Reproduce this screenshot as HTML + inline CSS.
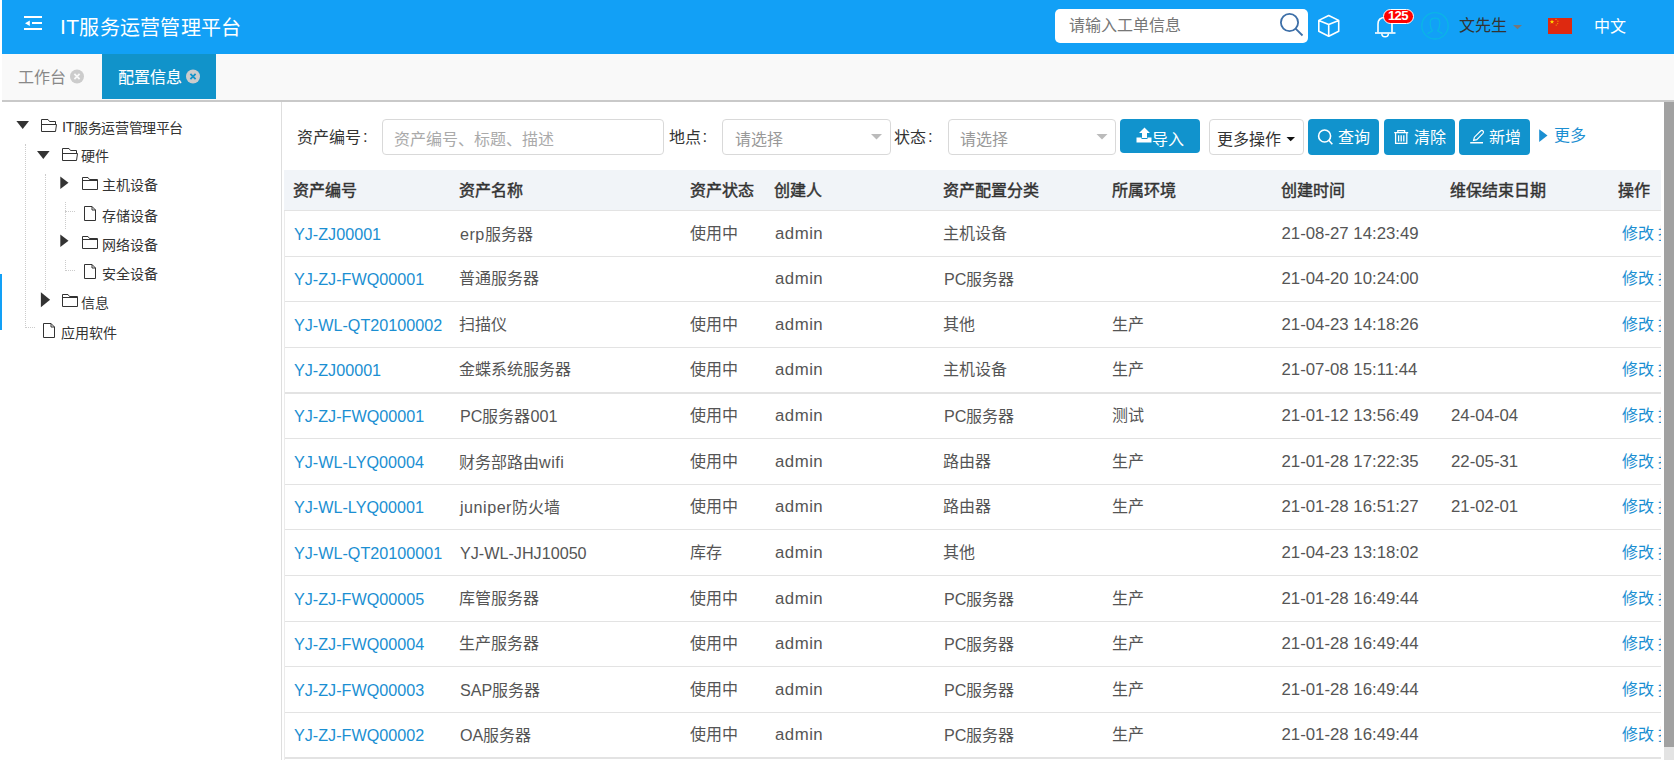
<!DOCTYPE html><html lang="zh-CN"><head><meta charset="utf-8"><style>
*{box-sizing:border-box;margin:0;padding:0}
html,body{width:1674px;height:760px;overflow:hidden;background:#fff;font-family:"Liberation Sans",sans-serif;}
.t{position:absolute;white-space:nowrap;line-height:1}
.a{position:absolute}
.l{font-size:1.05em}
.id .l{font-size:1.01em}
.c{position:relative;top:0.07em}
.rw .c{top:0}
.rw .lw{letter-spacing:0.5px}
svg{position:absolute;overflow:visible}
</style></head><body>
<div class="a" style="left:2px;top:0;width:1672px;height:54px;background:#12a0f6"></div>
<div class="a" style="left:24px;top:16px;width:18px;height:2px;background:#fff"></div>
<div class="a" style="left:32px;top:22px;width:10px;height:2px;background:#fff"></div>
<div class="a" style="left:24px;top:28px;width:18px;height:2px;background:#fff"></div>
<svg style="left:0;top:0" width="60" height="40"><path d="M25 23.2 L29.8 20.6 L29.8 25.9 Z" fill="#fff"/></svg>
<div class="t ttl" style="left:60px;top:16px;font-size:20px;color:#fff;font-weight:normal;letter-spacing:0.3px"><span class="l">IT</span><span class="c">服务运营管理平台</span></div>
<div class="a" style="left:1055px;top:9px;width:253px;height:34px;background:#fff;border-radius:5px"></div>
<div class="t " style="left:1069px;top:17px;font-size:16px;color:#777;font-weight:normal;"><span class="c">请输入工单信息</span></div>
<svg style="left:0;top:0" width="1674" height="60"><circle cx="1289.5" cy="22.5" r="8.6" fill="none" stroke="#3d6fa8" stroke-width="1.8"/><line x1="1295.6" y1="28.6" x2="1302.5" y2="35.5" stroke="#3d6fa8" stroke-width="1.8"/></svg>
<svg style="left:0;top:0" width="1674" height="60"><path d="M1328.7 15.5 L1338.7 20.4 L1338.7 31.2 L1328.7 36.2 L1318.8 31.2 L1318.8 20.4 Z M1318.8 20.4 L1328.7 24.6 L1338.7 20.4 M1328.7 24.6 L1328.7 36.2" fill="none" stroke="#fff" stroke-width="1.6" stroke-linejoin="round"/></svg>
<svg style="left:0;top:0" width="1674" height="60"><path d="M1378 32.5 L1378 24 Q1378 17.5 1385 17.5 Q1392 17.5 1392 24 L1392 32.5" fill="none" stroke="#fff" stroke-width="1.6"/><line x1="1375" y1="33" x2="1395.5" y2="33" stroke="#fff" stroke-width="1.6"/><path d="M1381.8 33.5 A3.3 3.3 0 0 0 1388.4 33.5" fill="none" stroke="#fff" stroke-width="1.5"/></svg>
<div class="a" style="left:1383px;top:9px;width:31px;height:15px;background:#f00;border:1px solid #fff;border-radius:8px"></div>
<div class="t " style="left:1388px;top:8.5px;font-size:12.5px;color:#fff;font-weight:bold;letter-spacing:-0.7px"><span class="l">125</span></div>
<svg style="left:0;top:0" width="1674" height="60"><circle cx="1435" cy="25.8" r="13.2" fill="none" stroke="#0bb5e6" stroke-width="1.3"/><path d="M1427.6 33.6 L1432.3 30.8 Q1430.2 28 1430.2 23 Q1430.2 18.2 1435 18.2 Q1439.8 18.2 1439.8 23 Q1439.8 28 1437.7 30.8 L1442.4 33.6" fill="none" stroke="#0bb5e6" stroke-width="1.3"/></svg>
<div class="t " style="left:1459px;top:17px;font-size:16px;color:#333;font-weight:normal;"><span class="c">文先生</span></div>
<svg style="left:0;top:0" width="1674" height="60"><path d="M1513 25 L1522 25 L1517.5 29.3 Z" fill="#777"/></svg>
<div class="a" style="left:1548px;top:18px;width:24px;height:16px;background:#de2910"></div>
<svg style="left:0;top:0" width="1674" height="60"><path d="M1552.00 19.40 L1552.59 20.99 L1554.28 21.06 L1552.95 22.11 L1553.41 23.74 L1552.00 22.80 L1550.59 23.74 L1551.05 22.11 L1549.72 21.06 L1551.41 20.99 Z" fill="#ffd400"/><circle cx="1556" cy="19.4" r="0.6" fill="#f5a800"/><circle cx="1557.9" cy="21.2" r="0.6" fill="#f5a800"/><circle cx="1557.7" cy="23.6" r="0.6" fill="#f5a800"/><circle cx="1556.2" cy="25.1" r="0.6" fill="#f5a800"/></svg>
<div class="t " style="left:1594px;top:18px;font-size:16px;color:#fff;font-weight:normal;"><span class="c">中文</span></div>
<div class="a" style="left:2px;top:54px;width:1672px;height:48px;background:#f9f9f9;border-bottom:2px solid #c9c9c9"></div>
<div class="t " style="left:18px;top:69px;font-size:16px;color:#888;font-weight:normal;"><span class="c">工作台</span></div>
<svg style="left:0;top:0" width="1674" height="110"><circle cx="77" cy="76.5" r="7" fill="#ccc"/><path d="M74.4 73.9 L79.6 79.1 M79.6 73.9 L74.4 79.1" stroke="#f9f9f9" stroke-width="1.8"/></svg>
<div class="a" style="left:102px;top:54px;width:114px;height:45px;background:#1193ca"></div>
<div class="t " style="left:118px;top:68.5px;font-size:16px;color:#fff;font-weight:normal;-webkit-text-stroke:0.12px #fff"><span class="c">配置信息</span></div>
<svg style="left:0;top:0" width="1674" height="110"><circle cx="193" cy="76.5" r="7" fill="#ccc"/><path d="M190.4 73.9 L195.6 79.1 M195.6 73.9 L190.4 79.1" stroke="#1193ca" stroke-width="1.8"/></svg>
<div class="a" style="left:281px;top:102px;width:1px;height:658px;background:#dedede"></div>
<div class="a" style="left:0;top:274px;width:2px;height:56px;background:#12a0f6"></div>
<svg style="left:0;top:0" width="300" height="400"><path d="M16.4 121 L29.0 121 L22.7 129 Z" fill="#333"/></svg>
<svg style="left:0;top:0" width="300" height="400"><path d="M41.5 131.5 L41.5 119.5 L48 119.5 L49.5 121.5 L55.5 121.5 L55.5 124.5 M41.5 124.5 L56.5 124.5 L55.5 131.5 L41.5 131.5" fill="none" stroke="#333" stroke-width="1"/></svg>
<div class="t " style="left:62px;top:120px;font-size:14px;color:#333;font-weight:normal;letter-spacing:-0.4px"><span class="l">IT</span><span class="c">服务运营管理平台</span></div>
<svg style="left:0;top:0" width="300" height="400"><path d="M37 151 L49.6 151 L43.3 159 Z" fill="#333"/></svg>
<svg style="left:0;top:0" width="300" height="400"><path d="M62.5 160.5 L62.5 148.5 L69 148.5 L70.5 150.5 L76.5 150.5 L76.5 153.5 M62.5 153.5 L77.5 153.5 L76.5 160.5 L62.5 160.5" fill="none" stroke="#333" stroke-width="1"/></svg>
<div class="t " style="left:81px;top:148px;font-size:14px;color:#333;font-weight:normal;letter-spacing:-0.15px"><span class="c">硬件</span></div>
<svg style="left:0;top:0" width="300" height="400"><path d="M60.3 176.5 L68.5 182.75 L60.3 189.0 Z" fill="#333"/></svg>
<svg style="left:0;top:0" width="300" height="400"><path d="M82.5 189.5 L82.5 177.5 L88 177.5 L89.5 179.5 L97.5 179.5 L97.5 189.5 Z M82.5 180.5 L97.5 180.5" fill="none" stroke="#333" stroke-width="1"/></svg>
<div class="t " style="left:102px;top:177.5px;font-size:14px;color:#333;font-weight:normal;letter-spacing:-0.15px"><span class="c">主机设备</span></div>
<svg style="left:0;top:0" width="300" height="400"><path d="M84.5 206.5 L92 206.5 L95.5 210 L95.5 220.5 L84.5 220.5 Z M92 206.5 L92 210 L95.5 210" fill="none" stroke="#333" stroke-width="1"/></svg>
<div class="t " style="left:102px;top:208px;font-size:14px;color:#333;font-weight:normal;letter-spacing:-0.15px"><span class="c">存储设备</span></div>
<svg style="left:0;top:0" width="300" height="400"><path d="M60.3 234.5 L68.5 240.75 L60.3 247.0 Z" fill="#333"/></svg>
<svg style="left:0;top:0" width="300" height="400"><path d="M82.5 248.5 L82.5 236.5 L88 236.5 L89.5 238.5 L97.5 238.5 L97.5 248.5 Z M82.5 239.5 L97.5 239.5" fill="none" stroke="#333" stroke-width="1"/></svg>
<div class="t " style="left:102px;top:237px;font-size:14px;color:#333;font-weight:normal;letter-spacing:-0.15px"><span class="c">网络设备</span></div>
<svg style="left:0;top:0" width="300" height="400"><path d="M84.5 264.5 L92 264.5 L95.5 268 L95.5 278.5 L84.5 278.5 Z M92 264.5 L92 268 L95.5 268" fill="none" stroke="#333" stroke-width="1"/></svg>
<div class="t " style="left:102px;top:266px;font-size:14px;color:#333;font-weight:normal;letter-spacing:-0.15px"><span class="c">安全设备</span></div>
<svg style="left:0;top:0" width="300" height="400"><path d="M40.9 292.3 L50.099999999999994 299.8 L40.9 307.3 Z" fill="#333"/></svg>
<svg style="left:0;top:0" width="300" height="400"><path d="M62.5 306.5 L62.5 294.5 L68 294.5 L69.5 296.5 L77.5 296.5 L77.5 306.5 Z M62.5 297.5 L77.5 297.5" fill="none" stroke="#333" stroke-width="1"/></svg>
<div class="t " style="left:81px;top:295px;font-size:14px;color:#333;font-weight:normal;letter-spacing:-0.15px"><span class="c">信息</span></div>
<svg style="left:0;top:0" width="300" height="400"><path d="M43.5 323.5 L51 323.5 L54.5 327 L54.5 337.5 L43.5 337.5 Z M51 323.5 L51 327 L54.5 327" fill="none" stroke="#333" stroke-width="1"/></svg>
<div class="t " style="left:61px;top:325px;font-size:14px;color:#333;font-weight:normal;letter-spacing:-0.15px"><span class="c">应用软件</span></div>
<div class="a" style="left:25px;top:144px;width:1px;height:184px;border-left:1px dotted #ccc"></div>
<div class="a" style="left:25px;top:327px;width:10px;height:1px;border-top:1px dotted #ccc"></div>
<div class="a" style="left:45px;top:174px;width:1px;height:116px;border-left:1px dotted #ccc"></div>
<div class="a" style="left:65px;top:202px;width:1px;height:27px;border-left:1px dotted #ccc"></div>
<div class="a" style="left:65px;top:211px;width:10px;height:1px;border-top:1px dotted #ccc"></div>
<div class="a" style="left:65px;top:260px;width:1px;height:11px;border-left:1px dotted #ccc"></div>
<div class="a" style="left:65px;top:270px;width:10px;height:1px;border-top:1px dotted #ccc"></div>
<div class="t " style="left:297px;top:129px;font-size:16px;color:#333;font-weight:normal;"><span class="c">资产编号</span><span class="l" style="padding-left:2px">:</span></div>
<div class="a" style="left:382px;top:119px;width:282px;height:36px;border:1px solid #d9d9d9;border-radius:4px;background:#fff"></div>
<div class="t " style="left:394px;top:131px;font-size:16px;color:#aaa;font-weight:normal;"><span class="c">资产编号、标题、描述</span></div>
<div class="t " style="left:668.5px;top:129px;font-size:16px;color:#333;font-weight:normal;"><span class="c">地点</span><span class="l" style="padding-left:2px">:</span></div>
<div class="a" style="left:722px;top:119px;width:169px;height:36px;border:1px solid #d9d9d9;border-radius:4px;background:#fff"></div>
<div class="t " style="left:734.5px;top:130.5px;font-size:16px;color:#999;font-weight:normal;"><span class="c">请选择</span></div>
<div class="t " style="left:894px;top:129px;font-size:16px;color:#333;font-weight:normal;"><span class="c">状态</span><span class="l" style="padding-left:2px">:</span></div>
<div class="a" style="left:948px;top:119px;width:168px;height:36px;border:1px solid #d9d9d9;border-radius:4px;background:#fff"></div>
<div class="t " style="left:959.5px;top:130.5px;font-size:16px;color:#999;font-weight:normal;"><span class="c">请选择</span></div>
<svg style="left:0;top:0" width="1674" height="200"><path d="M871 134 L882 134 L876.5 139.5 Z" fill="#bbb"/><path d="M1096.5 134 L1107.5 134 L1102 139.5 Z" fill="#bbb"/></svg>
<div class="a" style="left:1120px;top:119px;width:80px;height:34px;background:#1193cd;border-radius:4px"></div>
<svg style="left:0;top:0" width="1674" height="200"><path d="M1144.5 127.5 L1150 133 L1147 133 L1147 138 L1142 138 L1142 133 L1139 133 Z" fill="#fff"/><path d="M1136.5 137.5 L1141.5 137.5 L1141.5 139 L1147.5 139 L1147.5 137.5 L1151.5 137.5 L1151.5 142.5 L1136.5 142.5 Z" fill="#fff"/></svg>
<div class="t " style="left:1151.5px;top:131px;font-size:16px;color:#fff;font-weight:normal;"><span class="c">导入</span></div>
<div class="a" style="left:1209px;top:119px;width:95px;height:36px;border:1px solid #d9d9d9;border-radius:4px;background:#fff"></div>
<div class="t " style="left:1217px;top:131px;font-size:16px;color:#333;font-weight:normal;"><span class="c">更多操作</span></div>
<svg style="left:0;top:0" width="1674" height="200"><path d="M1286.5 137 L1295 137 L1290.7 141.3 Z" fill="#111"/></svg>
<div class="a" style="left:1308px;top:119px;width:71px;height:36px;background:#1193cd;border-radius:4px"></div>
<svg style="left:0;top:0" width="1674" height="200"><circle cx="1324.6" cy="136" r="6" fill="none" stroke="#fff" stroke-width="1.6"/><line x1="1328.8" y1="140.2" x2="1332.3" y2="144.3" stroke="#fff" stroke-width="1.6"/></svg>
<div class="t " style="left:1338px;top:129px;font-size:16px;color:#fff;font-weight:normal;"><span class="c">查询</span></div>
<div class="a" style="left:1384px;top:119px;width:71px;height:36px;background:#1193cd;border-radius:4px"></div>
<svg style="left:0;top:0" width="1674" height="200"><path d="M1397.8 132 V130.6 H1404.6 V132 M1394.2 132.6 H1408.2 M1395.6 133 V143.3 H1406.8 V133 M1398.6 135.2 V141.6 M1401.2 135.2 V141.6 M1403.8 135.2 V141.6" fill="none" stroke="#fff" stroke-width="1.3"/></svg>
<div class="t " style="left:1413.5px;top:129px;font-size:16px;color:#fff;font-weight:normal;"><span class="c">清除</span></div>
<div class="a" style="left:1459px;top:119px;width:71px;height:36px;background:#1193cd;border-radius:4px"></div>
<svg style="left:0;top:0" width="1674" height="200"><path d="M1473.6 140.4 L1474.4 137.2 L1480.6 131 Q1481.9 129.9 1483 131 Q1484.1 132.1 1483 133.4 L1476.8 139.6 Z" fill="none" stroke="#fff" stroke-width="1.2"/><rect x="1470.2" y="142" width="12.8" height="1.5" fill="#fff"/></svg>
<div class="t " style="left:1489px;top:129px;font-size:16px;color:#fff;font-weight:normal;"><span class="c">新增</span></div>
<svg style="left:0;top:0" width="1674" height="200"><path d="M1539.2 129.2 L1547.5 135.5 L1539.2 141.9 Z" fill="#1b8fd2"/></svg>
<div class="t " style="left:1553.5px;top:127px;font-size:16px;color:#1b8fd2;font-weight:normal;"><span class="c">更多</span></div>
<div class="a" style="left:284px;top:170px;width:1377px;height:40px;background:#f1f4f8"></div>
<div class="t " style="left:293px;top:181.5px;font-size:16px;color:#333;font-weight:normal;-webkit-text-stroke:0.45px #333"><span class="c">资产编号</span></div>
<div class="t " style="left:459px;top:181.5px;font-size:16px;color:#333;font-weight:normal;-webkit-text-stroke:0.45px #333"><span class="c">资产名称</span></div>
<div class="t " style="left:689.5px;top:181.5px;font-size:16px;color:#333;font-weight:normal;-webkit-text-stroke:0.45px #333"><span class="c">资产状态</span></div>
<div class="t " style="left:774px;top:181.5px;font-size:16px;color:#333;font-weight:normal;-webkit-text-stroke:0.45px #333"><span class="c">创建人</span></div>
<div class="t " style="left:943px;top:181.5px;font-size:16px;color:#333;font-weight:normal;-webkit-text-stroke:0.45px #333"><span class="c">资产配置分类</span></div>
<div class="t " style="left:1111.5px;top:181.5px;font-size:16px;color:#333;font-weight:normal;-webkit-text-stroke:0.45px #333"><span class="c">所属环境</span></div>
<div class="t " style="left:1280.5px;top:181.5px;font-size:16px;color:#333;font-weight:normal;-webkit-text-stroke:0.45px #333"><span class="c">创建时间</span></div>
<div class="t " style="left:1450px;top:181.5px;font-size:16px;color:#333;font-weight:normal;-webkit-text-stroke:0.45px #333"><span class="c">维保结束日期</span></div>
<div class="t " style="left:1618px;top:181.5px;font-size:16px;color:#333;font-weight:normal;-webkit-text-stroke:0.45px #333"><span class="c">操作</span></div>
<div class="a" style="left:284px;top:210px;width:1377px;height:1px;background:#e3e3e3"></div>
<div class="a" style="left:284px;top:256px;width:1377px;height:1px;background:#e3e3e3"></div>
<div class="a" style="left:284px;top:301px;width:1377px;height:1px;background:#e3e3e3"></div>
<div class="a" style="left:284px;top:347px;width:1377px;height:1px;background:#e3e3e3"></div>
<div class="a" style="left:284px;top:392px;width:1377px;height:2px;background:#e3e3e3"></div>
<div class="a" style="left:284px;top:438px;width:1377px;height:1px;background:#e3e3e3"></div>
<div class="a" style="left:284px;top:484px;width:1377px;height:1px;background:#e3e3e3"></div>
<div class="a" style="left:284px;top:529px;width:1377px;height:1px;background:#e3e3e3"></div>
<div class="a" style="left:284px;top:575px;width:1377px;height:1px;background:#e3e3e3"></div>
<div class="a" style="left:284px;top:621px;width:1377px;height:1px;background:#e3e3e3"></div>
<div class="a" style="left:284px;top:666px;width:1377px;height:1px;background:#e3e3e3"></div>
<div class="a" style="left:284px;top:712px;width:1377px;height:1px;background:#e3e3e3"></div>
<div class="a" style="left:284px;top:757px;width:1377px;height:2px;background:#e3e3e3"></div>
<div class="a" style="left:284px;top:211px;width:1px;height:549px;background:#ebebeb"></div>
<div class="a" style="left:284px;top:211px;width:1377px;height:549px;overflow:hidden">
<div class="t rw id" style="left:10px;top:14.5px;font-size:16px;color:#1b8fd2"><span class="l">YJ-ZJ00001</span></div>
<div class="t rw id" style="left:176px;top:14.5px;font-size:16px;color:#555"><span class="l lw">erp</span><span class="c">服务器</span></div>
<div class="t rw" style="left:405.5px;top:14.5px;font-size:16px;color:#555"><span class="c">使用中</span></div>
<div class="t rw" style="left:491px;top:14.5px;font-size:16px;color:#555"><span class="l lw">admin</span></div>
<div class="t rw id" style="left:659px;top:14.5px;font-size:16px;color:#555"><span class="c">主机设备</span></div>
<div class="t rw" style="left:997.5px;top:14.5px;font-size:16px;color:#555"><span class="l">21-08-27 14:23:49</span></div>
<div class="t rw" style="left:1337.5px;top:14.5px;font-size:16px;color:#1b8fd2"><span class="c">修改</span><span class="l"> </span><span class="c">报废</span></div>
<div class="t rw id" style="left:10px;top:60.0px;font-size:16px;color:#1b8fd2"><span class="l">YJ-ZJ-FWQ00001</span></div>
<div class="t rw id" style="left:175px;top:60.0px;font-size:16px;color:#555"><span class="c">普通服务器</span></div>
<div class="t rw" style="left:491px;top:60.0px;font-size:16px;color:#555"><span class="l lw">admin</span></div>
<div class="t rw id" style="left:660px;top:60.0px;font-size:16px;color:#555"><span class="l">PC</span><span class="c">服务器</span></div>
<div class="t rw" style="left:997.5px;top:60.0px;font-size:16px;color:#555"><span class="l">21-04-20 10:24:00</span></div>
<div class="t rw" style="left:1337.5px;top:60.0px;font-size:16px;color:#1b8fd2"><span class="c">修改</span><span class="l"> </span><span class="c">报废</span></div>
<div class="t rw id" style="left:10px;top:105.5px;font-size:16px;color:#1b8fd2"><span class="l">YJ-WL-QT20100002</span></div>
<div class="t rw id" style="left:175px;top:105.5px;font-size:16px;color:#555"><span class="c">扫描仪</span></div>
<div class="t rw" style="left:405.5px;top:105.5px;font-size:16px;color:#555"><span class="c">使用中</span></div>
<div class="t rw" style="left:491px;top:105.5px;font-size:16px;color:#555"><span class="l lw">admin</span></div>
<div class="t rw id" style="left:659px;top:105.5px;font-size:16px;color:#555"><span class="c">其他</span></div>
<div class="t rw" style="left:827.5px;top:105.5px;font-size:16px;color:#555"><span class="c">生产</span></div>
<div class="t rw" style="left:997.5px;top:105.5px;font-size:16px;color:#555"><span class="l">21-04-23 14:18:26</span></div>
<div class="t rw" style="left:1337.5px;top:105.5px;font-size:16px;color:#1b8fd2"><span class="c">修改</span><span class="l"> </span><span class="c">报废</span></div>
<div class="t rw id" style="left:10px;top:151.0px;font-size:16px;color:#1b8fd2"><span class="l">YJ-ZJ00001</span></div>
<div class="t rw id" style="left:175px;top:151.0px;font-size:16px;color:#555"><span class="c">金蝶系统服务器</span></div>
<div class="t rw" style="left:405.5px;top:151.0px;font-size:16px;color:#555"><span class="c">使用中</span></div>
<div class="t rw" style="left:491px;top:151.0px;font-size:16px;color:#555"><span class="l lw">admin</span></div>
<div class="t rw id" style="left:659px;top:151.0px;font-size:16px;color:#555"><span class="c">主机设备</span></div>
<div class="t rw" style="left:827.5px;top:151.0px;font-size:16px;color:#555"><span class="c">生产</span></div>
<div class="t rw" style="left:997.5px;top:151.0px;font-size:16px;color:#555"><span class="l">21-07-08 15:11:44</span></div>
<div class="t rw" style="left:1337.5px;top:151.0px;font-size:16px;color:#1b8fd2"><span class="c">修改</span><span class="l"> </span><span class="c">报废</span></div>
<div class="t rw id" style="left:10px;top:196.5px;font-size:16px;color:#1b8fd2"><span class="l">YJ-ZJ-FWQ00001</span></div>
<div class="t rw id" style="left:176px;top:196.5px;font-size:16px;color:#555"><span class="l">PC</span><span class="c">服务器</span><span class="l">001</span></div>
<div class="t rw" style="left:405.5px;top:196.5px;font-size:16px;color:#555"><span class="c">使用中</span></div>
<div class="t rw" style="left:491px;top:196.5px;font-size:16px;color:#555"><span class="l lw">admin</span></div>
<div class="t rw id" style="left:660px;top:196.5px;font-size:16px;color:#555"><span class="l">PC</span><span class="c">服务器</span></div>
<div class="t rw" style="left:827.5px;top:196.5px;font-size:16px;color:#555"><span class="c">测试</span></div>
<div class="t rw" style="left:997.5px;top:196.5px;font-size:16px;color:#555"><span class="l">21-01-12 13:56:49</span></div>
<div class="t rw" style="left:1167px;top:196.5px;font-size:16px;color:#555"><span class="l">24-04-04</span></div>
<div class="t rw" style="left:1337.5px;top:196.5px;font-size:16px;color:#1b8fd2"><span class="c">修改</span><span class="l"> </span><span class="c">报废</span></div>
<div class="t rw id" style="left:10px;top:242.5px;font-size:16px;color:#1b8fd2"><span class="l">YJ-WL-LYQ00004</span></div>
<div class="t rw id" style="left:175px;top:242.5px;font-size:16px;color:#555"><span class="c">财务部路由</span><span class="l lw">wifi</span></div>
<div class="t rw" style="left:405.5px;top:242.5px;font-size:16px;color:#555"><span class="c">使用中</span></div>
<div class="t rw" style="left:491px;top:242.5px;font-size:16px;color:#555"><span class="l lw">admin</span></div>
<div class="t rw id" style="left:659px;top:242.5px;font-size:16px;color:#555"><span class="c">路由器</span></div>
<div class="t rw" style="left:827.5px;top:242.5px;font-size:16px;color:#555"><span class="c">生产</span></div>
<div class="t rw" style="left:997.5px;top:242.5px;font-size:16px;color:#555"><span class="l">21-01-28 17:22:35</span></div>
<div class="t rw" style="left:1167px;top:242.5px;font-size:16px;color:#555"><span class="l">22-05-31</span></div>
<div class="t rw" style="left:1337.5px;top:242.5px;font-size:16px;color:#1b8fd2"><span class="c">修改</span><span class="l"> </span><span class="c">报废</span></div>
<div class="t rw id" style="left:10px;top:288.0px;font-size:16px;color:#1b8fd2"><span class="l">YJ-WL-LYQ00001</span></div>
<div class="t rw id" style="left:176px;top:288.0px;font-size:16px;color:#555"><span class="l lw">juniper</span><span class="c">防火墙</span></div>
<div class="t rw" style="left:405.5px;top:288.0px;font-size:16px;color:#555"><span class="c">使用中</span></div>
<div class="t rw" style="left:491px;top:288.0px;font-size:16px;color:#555"><span class="l lw">admin</span></div>
<div class="t rw id" style="left:659px;top:288.0px;font-size:16px;color:#555"><span class="c">路由器</span></div>
<div class="t rw" style="left:827.5px;top:288.0px;font-size:16px;color:#555"><span class="c">生产</span></div>
<div class="t rw" style="left:997.5px;top:288.0px;font-size:16px;color:#555"><span class="l">21-01-28 16:51:27</span></div>
<div class="t rw" style="left:1167px;top:288.0px;font-size:16px;color:#555"><span class="l">21-02-01</span></div>
<div class="t rw" style="left:1337.5px;top:288.0px;font-size:16px;color:#1b8fd2"><span class="c">修改</span><span class="l"> </span><span class="c">报废</span></div>
<div class="t rw id" style="left:10px;top:333.5px;font-size:16px;color:#1b8fd2"><span class="l">YJ-WL-QT20100001</span></div>
<div class="t rw id" style="left:176px;top:333.5px;font-size:16px;color:#555"><span class="l">YJ-WL-JHJ10050</span></div>
<div class="t rw" style="left:405.5px;top:333.5px;font-size:16px;color:#555"><span class="c">库存</span></div>
<div class="t rw" style="left:491px;top:333.5px;font-size:16px;color:#555"><span class="l lw">admin</span></div>
<div class="t rw id" style="left:659px;top:333.5px;font-size:16px;color:#555"><span class="c">其他</span></div>
<div class="t rw" style="left:997.5px;top:333.5px;font-size:16px;color:#555"><span class="l">21-04-23 13:18:02</span></div>
<div class="t rw" style="left:1337.5px;top:333.5px;font-size:16px;color:#1b8fd2"><span class="c">修改</span><span class="l"> </span><span class="c">报废</span></div>
<div class="t rw id" style="left:10px;top:379.5px;font-size:16px;color:#1b8fd2"><span class="l">YJ-ZJ-FWQ00005</span></div>
<div class="t rw id" style="left:175px;top:379.5px;font-size:16px;color:#555"><span class="c">库管服务器</span></div>
<div class="t rw" style="left:405.5px;top:379.5px;font-size:16px;color:#555"><span class="c">使用中</span></div>
<div class="t rw" style="left:491px;top:379.5px;font-size:16px;color:#555"><span class="l lw">admin</span></div>
<div class="t rw id" style="left:660px;top:379.5px;font-size:16px;color:#555"><span class="l">PC</span><span class="c">服务器</span></div>
<div class="t rw" style="left:827.5px;top:379.5px;font-size:16px;color:#555"><span class="c">生产</span></div>
<div class="t rw" style="left:997.5px;top:379.5px;font-size:16px;color:#555"><span class="l">21-01-28 16:49:44</span></div>
<div class="t rw" style="left:1337.5px;top:379.5px;font-size:16px;color:#1b8fd2"><span class="c">修改</span><span class="l"> </span><span class="c">报废</span></div>
<div class="t rw id" style="left:10px;top:425.0px;font-size:16px;color:#1b8fd2"><span class="l">YJ-ZJ-FWQ00004</span></div>
<div class="t rw id" style="left:175px;top:425.0px;font-size:16px;color:#555"><span class="c">生产服务器</span></div>
<div class="t rw" style="left:405.5px;top:425.0px;font-size:16px;color:#555"><span class="c">使用中</span></div>
<div class="t rw" style="left:491px;top:425.0px;font-size:16px;color:#555"><span class="l lw">admin</span></div>
<div class="t rw id" style="left:660px;top:425.0px;font-size:16px;color:#555"><span class="l">PC</span><span class="c">服务器</span></div>
<div class="t rw" style="left:827.5px;top:425.0px;font-size:16px;color:#555"><span class="c">生产</span></div>
<div class="t rw" style="left:997.5px;top:425.0px;font-size:16px;color:#555"><span class="l">21-01-28 16:49:44</span></div>
<div class="t rw" style="left:1337.5px;top:425.0px;font-size:16px;color:#1b8fd2"><span class="c">修改</span><span class="l"> </span><span class="c">报废</span></div>
<div class="t rw id" style="left:10px;top:470.5px;font-size:16px;color:#1b8fd2"><span class="l">YJ-ZJ-FWQ00003</span></div>
<div class="t rw id" style="left:176px;top:470.5px;font-size:16px;color:#555"><span class="l">SAP</span><span class="c">服务器</span></div>
<div class="t rw" style="left:405.5px;top:470.5px;font-size:16px;color:#555"><span class="c">使用中</span></div>
<div class="t rw" style="left:491px;top:470.5px;font-size:16px;color:#555"><span class="l lw">admin</span></div>
<div class="t rw id" style="left:660px;top:470.5px;font-size:16px;color:#555"><span class="l">PC</span><span class="c">服务器</span></div>
<div class="t rw" style="left:827.5px;top:470.5px;font-size:16px;color:#555"><span class="c">生产</span></div>
<div class="t rw" style="left:997.5px;top:470.5px;font-size:16px;color:#555"><span class="l">21-01-28 16:49:44</span></div>
<div class="t rw" style="left:1337.5px;top:470.5px;font-size:16px;color:#1b8fd2"><span class="c">修改</span><span class="l"> </span><span class="c">报废</span></div>
<div class="t rw id" style="left:10px;top:516.0px;font-size:16px;color:#1b8fd2"><span class="l">YJ-ZJ-FWQ00002</span></div>
<div class="t rw id" style="left:176px;top:516.0px;font-size:16px;color:#555"><span class="l">OA</span><span class="c">服务器</span></div>
<div class="t rw" style="left:405.5px;top:516.0px;font-size:16px;color:#555"><span class="c">使用中</span></div>
<div class="t rw" style="left:491px;top:516.0px;font-size:16px;color:#555"><span class="l lw">admin</span></div>
<div class="t rw id" style="left:660px;top:516.0px;font-size:16px;color:#555"><span class="l">PC</span><span class="c">服务器</span></div>
<div class="t rw" style="left:827.5px;top:516.0px;font-size:16px;color:#555"><span class="c">生产</span></div>
<div class="t rw" style="left:997.5px;top:516.0px;font-size:16px;color:#555"><span class="l">21-01-28 16:49:44</span></div>
<div class="t rw" style="left:1337.5px;top:516.0px;font-size:16px;color:#1b8fd2"><span class="c">修改</span><span class="l"> </span><span class="c">报废</span></div>
</div>
<div class="a" style="left:1664px;top:102px;width:10px;height:658px;background:#e3e3e3"></div>
<div class="a" style="left:1664px;top:102px;width:10px;height:645px;background:#a1a1a1"></div>
</body></html>
